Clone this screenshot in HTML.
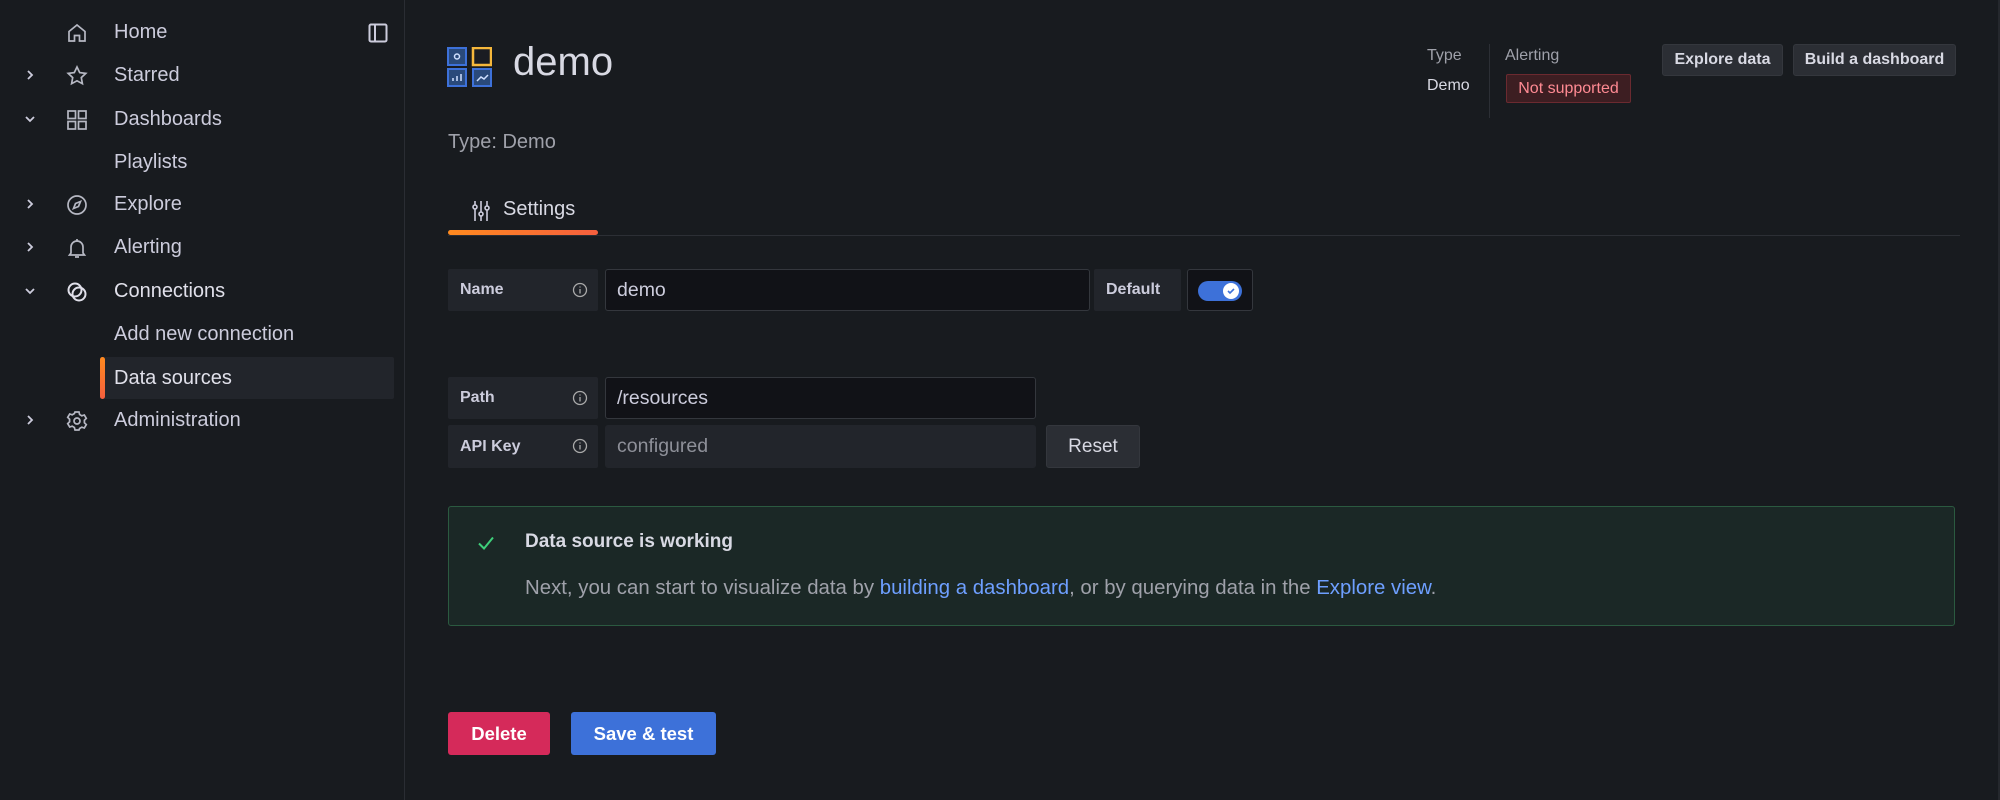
<!DOCTYPE html>
<html><head><meta charset="utf-8"><style>
*{box-sizing:border-box;margin:0;padding:0}
body{width:2000px;height:800px;background:#181b1f;font-family:"Liberation Sans",sans-serif;color:#ccccdc;position:relative;overflow:hidden}
.abs{position:absolute}
.side{left:0;top:0;width:405px;height:800px;border-right:1px solid #2a2d33;background:#181b1f}
.item{position:absolute;left:0;width:400px;height:42px;display:flex;align-items:center;font-size:20px;color:#ccccdc}
.item .t{position:absolute;left:114px}
.item .chev{position:absolute;left:22px;top:13px;width:16px;height:16px}
.item .ic{position:absolute;left:65px;top:10px;width:24px;height:24px}
svg{display:block}
.lbl{position:absolute;background:#22252b;border-radius:2px;font-size:16px;font-weight:bold;color:#ccccdc;display:flex;align-items:center;padding-left:12px}
.inp{position:absolute;background:#111217;border:1px solid #34373d;border-radius:3px;font-size:19.5px;color:#ccccdc;display:flex;align-items:center;padding-left:11px}
.info{position:absolute;right:10px;top:13px}
.btn{position:absolute;border-radius:3px;display:flex;align-items:center;justify-content:center;font-weight:bold}
</style></head><body>
<div class="abs side">
 <svg class="abs" style="left:368px;top:23px" width="20" height="20" viewBox="0 0 20 20"><rect x="1.5" y="1.5" width="17" height="17" rx="1.5" fill="none" stroke="#ccccdc" stroke-width="2"/><line x1="7" y1="2" x2="7" y2="18" stroke="#ccccdc" stroke-width="2"/></svg>
 <div class="item" style="top:11px"><svg class="ic" viewBox="0 0 24 24" fill="none" stroke="#b6b8c3" stroke-width="1.7"><path d="M4 10.5L12 4l8 6.5V20H14.5v-5.5h-5V20H4z"/></svg><span class="t">Home</span></div>
 <div class="item" style="top:54px"><svg class="chev" viewBox="0 0 16 16" fill="none" stroke="#ccccdc" stroke-width="1.8"><path d="M6 4l4 4-4 4"/></svg><svg class="ic" viewBox="0 0 24 24" fill="none" stroke="#b6b8c3" stroke-width="1.7"><path d="M12 3l2.7 5.6 6.1.8-4.5 4.2 1.1 6.1L12 16.8l-5.4 2.9 1.1-6.1-4.5-4.2 6.1-.8z"/></svg><span class="t">Starred</span></div>
 <div class="item" style="top:98px"><svg class="chev" viewBox="0 0 16 16" fill="none" stroke="#ccccdc" stroke-width="1.8"><path d="M4 6l4 4 4-4"/></svg><svg class="ic" viewBox="0 0 24 24" fill="none" stroke="#b6b8c3" stroke-width="1.7"><rect x="3" y="3" width="7.5" height="7.5"/><rect x="13.5" y="3" width="7.5" height="7.5"/><rect x="3" y="13.5" width="7.5" height="7.5"/><rect x="13.5" y="13.5" width="7.5" height="7.5"/></svg><span class="t">Dashboards</span></div>
 <div class="item" style="top:141px"><span class="t">Playlists</span></div>
 <div class="item" style="top:183px"><svg class="chev" viewBox="0 0 16 16" fill="none" stroke="#ccccdc" stroke-width="1.8"><path d="M6 4l4 4-4 4"/></svg><svg class="ic" viewBox="0 0 24 24" fill="none" stroke="#b6b8c3" stroke-width="1.7"><circle cx="12" cy="12" r="9"/><path d="M15.5 8.5l-2 5-5 2 2-5z"/></svg><span class="t">Explore</span></div>
 <div class="item" style="top:226px"><svg class="chev" viewBox="0 0 16 16" fill="none" stroke="#ccccdc" stroke-width="1.8"><path d="M6 4l4 4-4 4"/></svg><svg class="ic" viewBox="0 0 24 24" fill="none" stroke="#b6b8c3" stroke-width="1.7"><path d="M6 17V11a6 6 0 0112 0v6l1.5 2h-15zM10 21h4M12 3v2"/></svg><span class="t">Alerting</span></div>
 <div class="item" style="top:270px;color:#e0e0ea"><svg class="chev" viewBox="0 0 16 16" fill="none" stroke="#ccccdc" stroke-width="1.8"><path d="M4 6l4 4 4-4"/></svg><svg class="ic" viewBox="0 0 24 24" fill="none" stroke="#e0e0ea" stroke-width="2"><circle cx="10" cy="10" r="6.5"/><circle cx="14" cy="14" r="6.5"/></svg><span class="t">Connections</span></div>
 <div class="item" style="top:313px"><span class="t">Add new connection</span></div>
 <div class="abs" style="left:100px;top:357px;width:294px;height:42px;background:#22252b;border-radius:2px"></div>
 <div class="abs" style="left:100px;top:357px;width:5px;height:42px;background:linear-gradient(#ff8a1f,#f55f3e);border-radius:3px"></div>
 <div class="item" style="top:357px;color:#e0e0ea"><span class="t">Data sources</span></div>
 <div class="item" style="top:399px"><svg class="chev" viewBox="0 0 16 16" fill="none" stroke="#ccccdc" stroke-width="1.8"><path d="M6 4l4 4-4 4"/></svg><svg class="ic" viewBox="0 0 24 24" fill="none" stroke="#b6b8c3" stroke-width="1.7"><circle cx="12" cy="12" r="3"/><path d="M10 3h4l.6 2.5 2.2 1.3 2.5-.8 2 3.4-1.9 1.8v2.6l1.9 1.8-2 3.4-2.5-.8-2.2 1.3L14 21h-4l-.6-2.5-2.2-1.3-2.5.8-2-3.4 1.9-1.8v-2.6L2.7 8.4l2-3.4 2.5.8 2.2-1.3z"/></svg><span class="t">Administration</span></div>
</div>

<svg class="abs" style="left:447px;top:47px" width="45" height="40" viewBox="0 0 45 40">
<rect x="1" y="1" width="18" height="17" fill="#2a4a7a" stroke="#3d71d9" stroke-width="2"/>
<circle cx="10" cy="9.5" r="2.5" fill="none" stroke="#cfe0ff" stroke-width="1.5"/>
<rect x="26" y="1" width="18" height="17" fill="#1a1c22" stroke="#f5b73b" stroke-width="2.5"/>
<rect x="1" y="22" width="18" height="17" fill="#2a4a7a" stroke="#3d71d9" stroke-width="2"/>
<path d="M6 34v-3M10 34v-5M14 34v-7" stroke="#cfe0ff" stroke-width="1.5"/>
<rect x="26" y="22" width="18" height="17" fill="#2a4a7a" stroke="#3d71d9" stroke-width="2"/>
<path d="M30 34l4-4 3 2 4-4" fill="none" stroke="#cfe0ff" stroke-width="1.5"/>
</svg>
<div class="abs" style="left:513px;top:40px;font-size:40px;color:#d8d9e3">demo</div>
<div class="abs" style="left:448px;top:131px;font-size:20px;color:#9fa1aa">Type: Demo</div>

<svg class="abs" style="left:471px;top:200px" width="20" height="22" viewBox="0 0 20 22" fill="none" stroke="#ccccdc" stroke-width="1.6"><path d="M4 1v20M10 1v20M16 1v20"/><circle cx="4" cy="7" r="2" fill="#181b1f"/><circle cx="10" cy="14" r="2" fill="#181b1f"/><circle cx="16" cy="8" r="2" fill="#181b1f"/></svg>
<div class="abs" style="left:503px;top:198px;font-size:20px;color:#d8d9e3">Settings</div>
<div class="abs" style="left:448px;top:235px;width:1512px;height:1px;background:#2c2f35"></div>
<div class="abs" style="left:448px;top:230px;width:150px;height:5px;border-radius:3px;background:linear-gradient(90deg,#ff8a1f,#f55f3e)"></div>

<div class="lbl" style="left:448px;top:269px;width:150px;height:42px">Name<svg class="info" width="16" height="16" viewBox="0 0 16 16" fill="none" stroke="#aaa" stroke-width="1.3"><circle cx="8" cy="8" r="6.5"/><path d="M8 7v4.5M8 4.5v1"/></svg></div>
<div class="inp" style="left:605px;top:269px;width:485px;height:42px">demo</div>
<div class="lbl" style="left:1094px;top:269px;width:87px;height:42px">Default</div>
<div class="abs" style="left:1187px;top:269px;width:66px;height:42px;background:#111217;border:1px solid #34373d;border-radius:3px"></div>
<div class="abs" style="left:1198px;top:281px;width:44px;height:20px;border-radius:10px;background:#3d71d9"></div>
<div class="abs" style="left:1223px;top:283px;width:16px;height:16px;border-radius:50%;background:#fff"></div>
<svg class="abs" style="left:1226px;top:286px" width="10" height="10" viewBox="0 0 10 10"><path d="M2 5l2 2 4-4" fill="none" stroke="#3d71d9" stroke-width="1.6"/></svg>

<div class="lbl" style="left:448px;top:377px;width:150px;height:42px">Path<svg class="info" width="16" height="16" viewBox="0 0 16 16" fill="none" stroke="#aaa" stroke-width="1.3"><circle cx="8" cy="8" r="6.5"/><path d="M8 7v4.5M8 4.5v1"/></svg></div>
<div class="inp" style="left:605px;top:377px;width:431px;height:42px">/resources</div>
<div class="lbl" style="left:448px;top:425px;width:150px;height:43px">API Key<svg class="info" width="16" height="16" viewBox="0 0 16 16" fill="none" stroke="#aaa" stroke-width="1.3"><circle cx="8" cy="8" r="6.5"/><path d="M8 7v4.5M8 4.5v1"/></svg></div>
<div class="inp" style="left:605px;top:425px;width:431px;height:43px;background:#22252b;border-color:#22252b;color:#8e9099">configured</div>
<div class="btn" style="left:1046px;top:425px;width:94px;height:43px;background:#2b2e34;border:1px solid #34373d;font-size:19px;font-weight:normal;color:#d8d9e3">Reset</div>

<div class="abs" style="left:448px;top:506px;width:1507px;height:120px;background:#1b2826;border:1px solid #2b5a40;border-radius:3px"></div>
<svg class="abs" style="left:476px;top:533px" width="20" height="20" viewBox="0 0 20 20"><path d="M3 10.5l5 5 9-11" fill="none" stroke="#3ecf7a" stroke-width="2"/></svg>
<div class="abs" style="left:525px;top:531px;font-size:19px;font-weight:bold;color:#d8d9e3">Data source is working</div>
<div class="abs" style="left:525px;top:577px;font-size:20.4px;color:#9fa1aa">Next, you can start to visualize data by <span style="color:#6e9fff">building a dashboard</span>, or by querying data in the <span style="color:#6e9fff">Explore view</span>.</div>

<div class="btn" style="left:448px;top:712px;width:102px;height:43px;background:#d52a5a;color:#fff;font-size:18.5px">Delete</div>
<div class="btn" style="left:571px;top:712px;width:145px;height:43px;background:#3d71d9;color:#fff;font-size:18.5px">Save &amp; test</div>

<div class="abs" style="left:1427px;top:47px;font-size:16px;color:#9fa1aa">Type</div>
<div class="abs" style="left:1427px;top:77px;font-size:16px;color:#d8d9e3">Demo</div>
<div class="abs" style="left:1489px;top:44px;width:1px;height:74px;background:#2c2f35"></div>
<div class="abs" style="left:1505px;top:47px;font-size:16px;color:#9fa1aa">Alerting</div>
<div class="abs" style="left:1506px;top:74px;width:125px;height:29px;background:#3d1e22;border:1px solid #6b2a30;border-radius:2px;color:#ff8a93;font-size:16px;display:flex;align-items:center;justify-content:center">Not supported</div>
<div class="btn" style="left:1662px;top:44px;width:121px;height:32px;background:#2b2e34;border:1px solid #34373d;font-size:16px;color:#d8d9e3">Explore data</div>
<div class="btn" style="left:1793px;top:44px;width:163px;height:32px;background:#2b2e34;border:1px solid #34373d;font-size:16px;color:#d8d9e3">Build a dashboard</div>
<div class="abs" style="left:1998px;top:0;width:2px;height:800px;background:#25282d"></div>
</body></html>
